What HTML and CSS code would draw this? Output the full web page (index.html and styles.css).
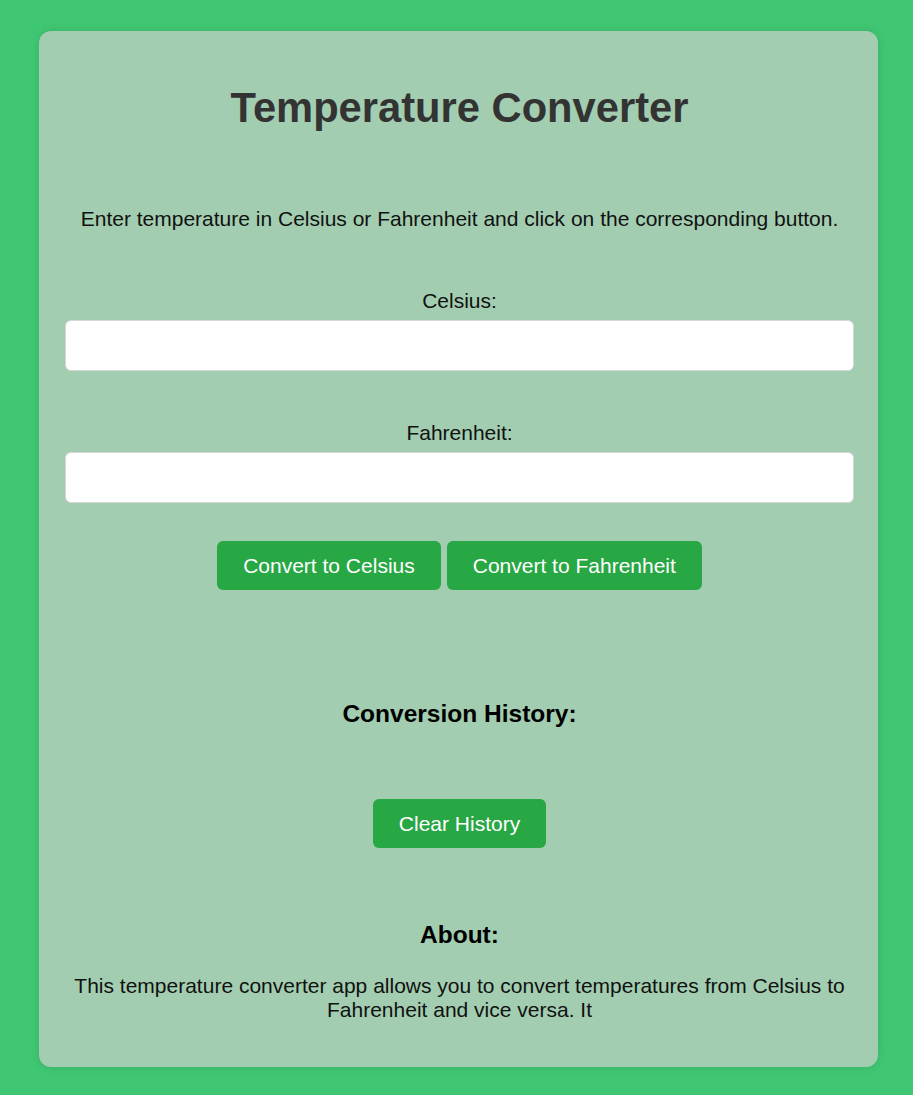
FILE: index.html
```html
<!DOCTYPE html>
<html lang="en">
<head>
<meta charset="utf-8">
<title>Temperature Converter</title>
<link rel="stylesheet" href="styles.css">
</head>
<body>
<main class="card">
  <h1 class="title">Temperature Converter</h1>
  <p class="intro">Enter temperature in Celsius or Fahrenheit and click on the corresponding button.</p>
  <div class="field">
    <label class="label" for="c">Celsius:</label>
    <input class="input" id="c" type="text">
  </div>
  <div class="field field-second">
    <label class="label" for="f">Fahrenheit:</label>
    <input class="input" id="f" type="text">
  </div>
  <div class="actions">
    <button class="btn btn-c">Convert to Celsius</button>
    <button class="btn btn-f">Convert to Fahrenheit</button>
  </div>
  <h3 class="subhead history-head">Conversion History:</h3>
  <div class="actions clear-row">
    <button class="btn btn-clear">Clear History</button>
  </div>
  <h3 class="subhead about-head">About:</h3>
  <p class="about">This temperature converter app allows you to convert temperatures from Celsius to Fahrenheit and vice versa. It</p>
</main>
</body>
</html>
```

FILE: styles.css
```css
html, body {
  margin: 0;
  padding: 0;
}

body {
  background: #40c773;
  font-family: "Liberation Sans", Arial, sans-serif;
  font-size: 21px;
  color: #111;
  padding: 31px 35px 27px 39px;
  min-height: 1095px;
  box-sizing: border-box;
}

.card {
  background: #a2cdb0;
  border-radius: 12px;
  box-shadow: 0 0 10px rgba(0, 0, 0, 0.12);
  padding: 52px 24px 30px 26px;
  text-align: center;
  display: flex;
  flex-direction: column;
  align-items: stretch;
  height: 1036px;
  box-sizing: border-box;
}

.title {
  margin: 0;
  font-size: 41.7px;
  font-weight: bold;
  color: #333;
  line-height: 50px;
}

.intro {
  margin: 74px 0 0;
  line-height: 24px;
}

.field {
  display: flex;
  flex-direction: column;
  margin-top: 58px;
}

.field-second {
  margin-top: 50px;
}

.label {
  line-height: 24px;
  margin-bottom: 7px;
}

.input {
  height: 51px;
  box-sizing: border-box;
  border: 1px solid #d6d6d6;
  border-radius: 6px;
  background: #fff;
  width: 100%;
  margin: 0;
  font: inherit;
}

.actions {
  display: flex;
  justify-content: center;
  gap: 6px;
  margin-top: 38px;
}

.btn {
  background: #28a745;
  color: #fff;
  border: none;
  border-radius: 6px;
  font-family: "Liberation Sans", Arial, sans-serif;
  font-size: 21px;
  line-height: 24px;
  height: 49px;
  padding: 0 26px;
  cursor: pointer;
}

.subhead {
  margin: 0;
  font-size: 24.5px;
  font-weight: bold;
  line-height: 28px;
  color: #000;
}

.history-head {
  margin-top: 110px;
}

.clear-row {
  margin-top: 71px;
}

.about-head {
  margin-top: 73px;
}

.about {
  margin: 25px 0 0;
  line-height: 24px;
}
```
